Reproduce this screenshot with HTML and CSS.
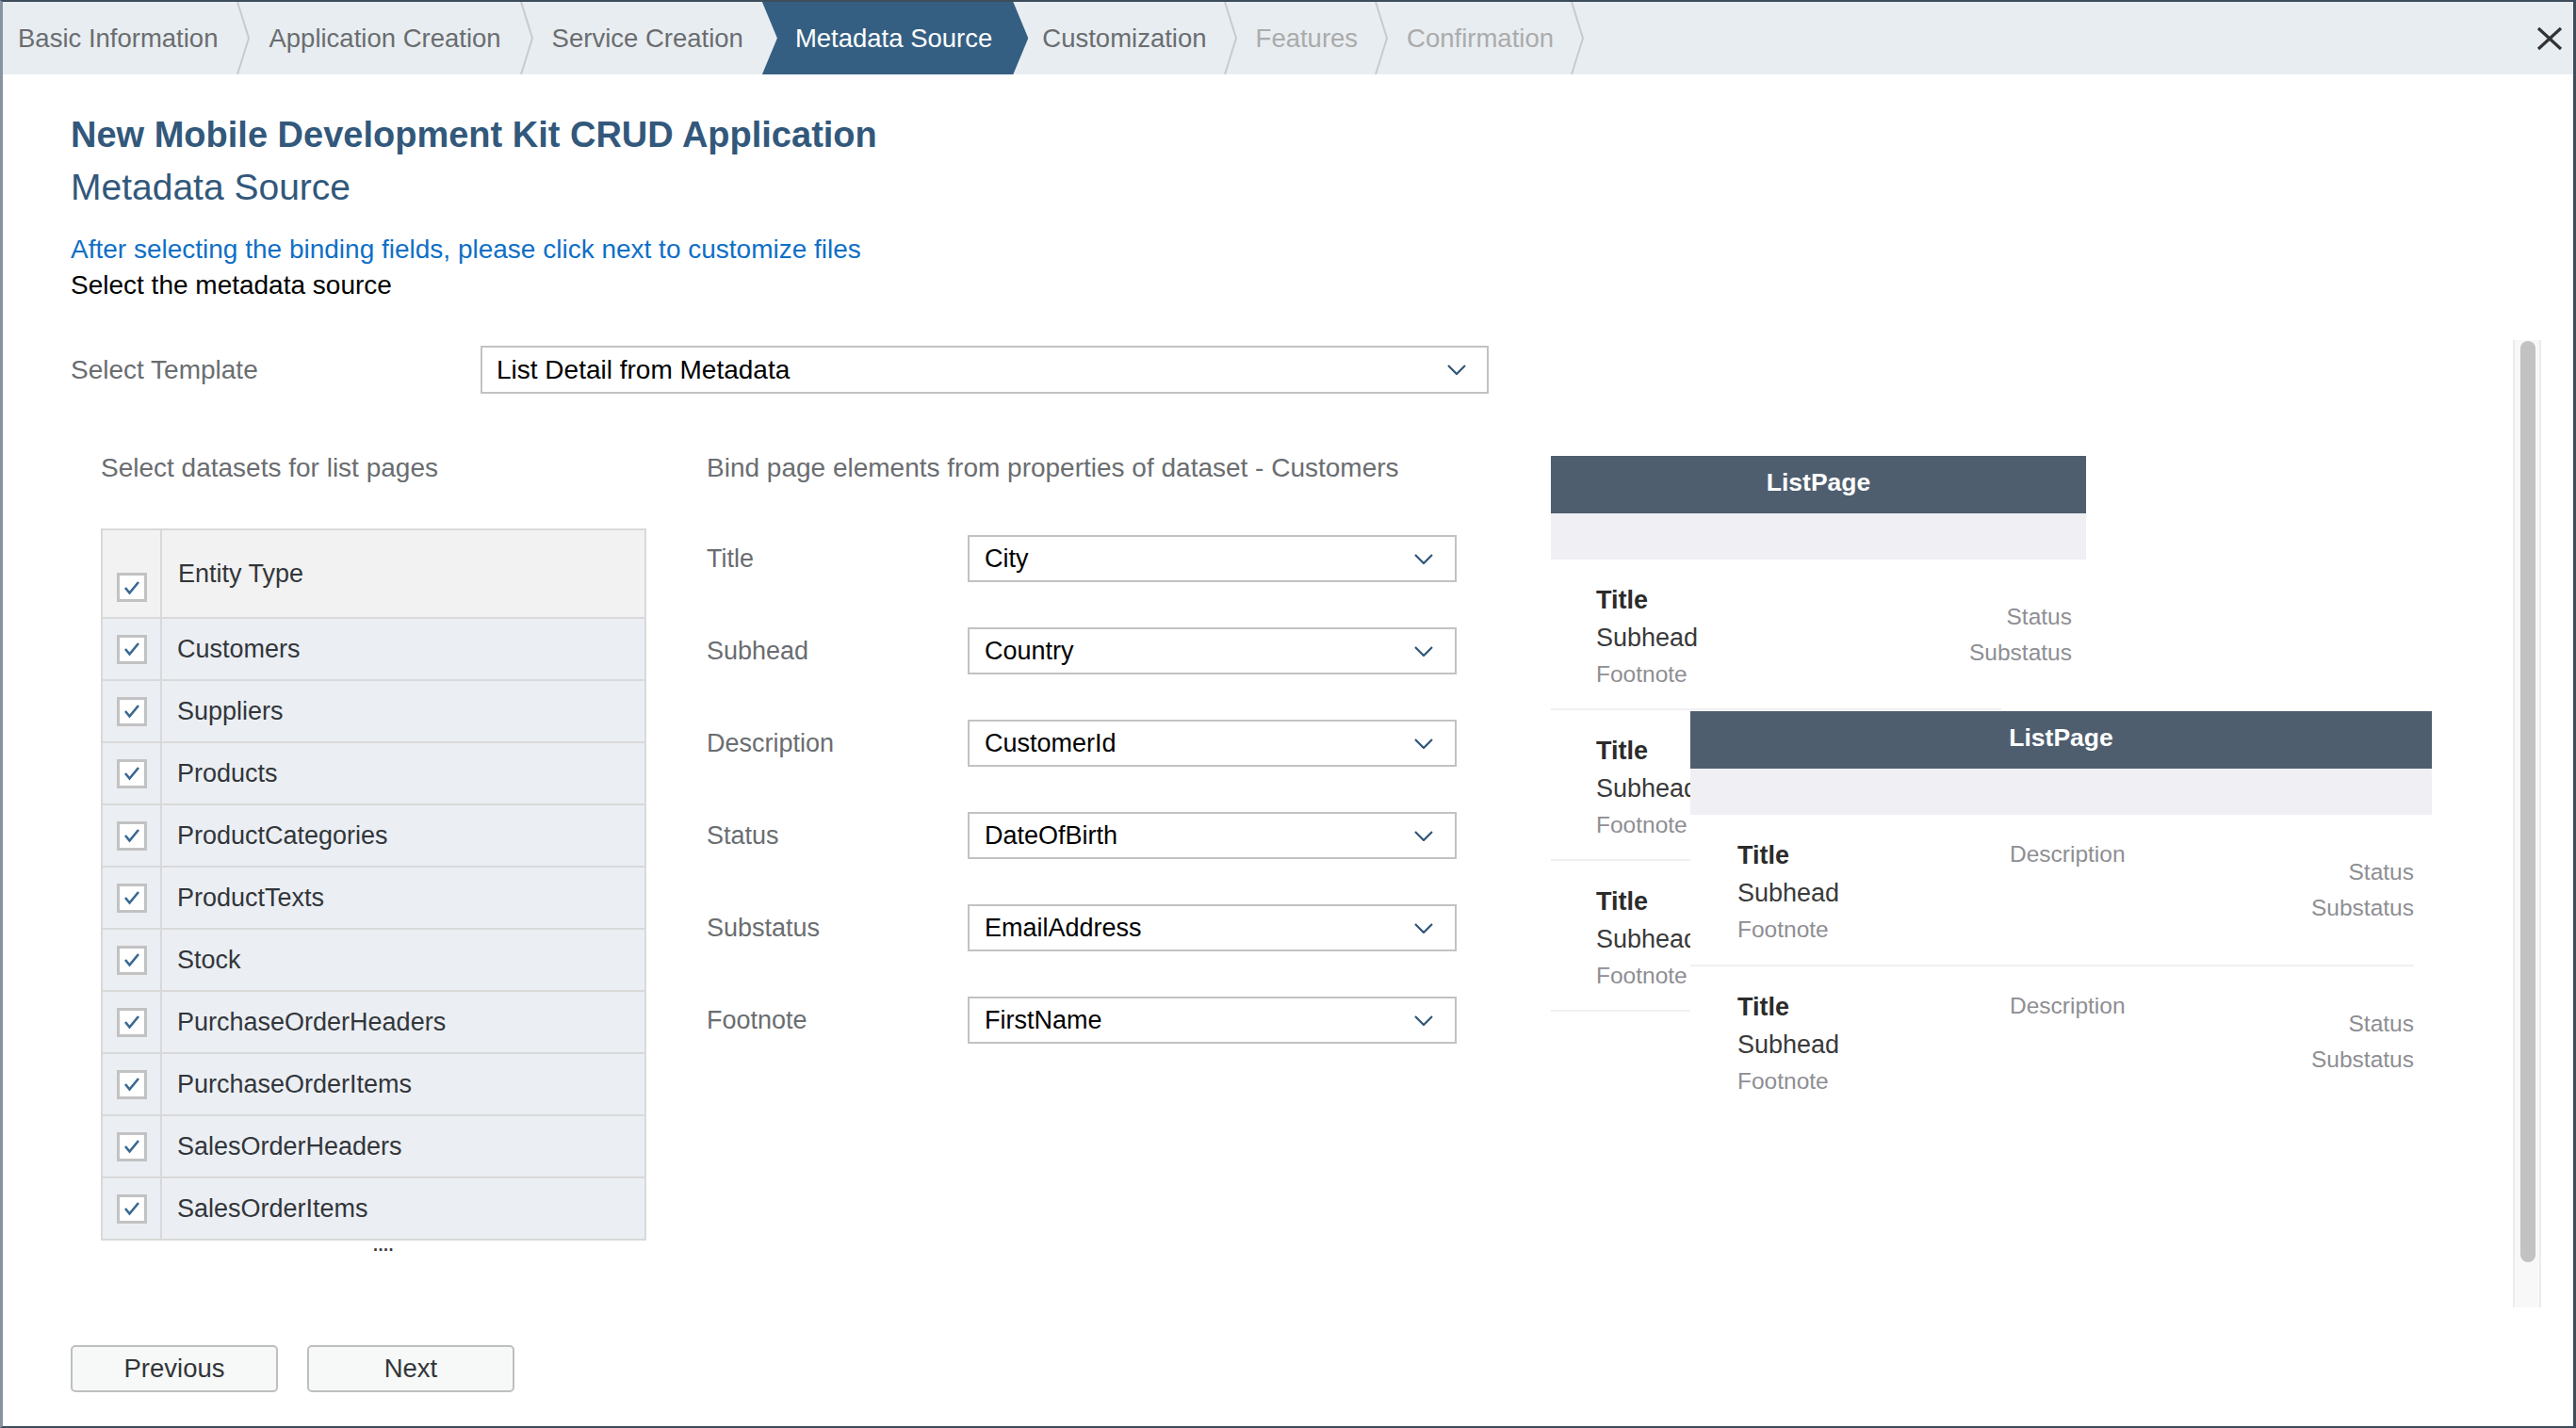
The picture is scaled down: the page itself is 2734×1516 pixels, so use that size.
FILE: index.html
```html
<!DOCTYPE html>
<html lang="en">
<head>
<meta charset="utf-8">
<title>New Mobile Development Kit CRUD Application</title>
<link rel="stylesheet" href="styles.css">
</head>
<body>
<div class="frame">
  <header class="wizard">
    <div class="step step-first">Basic Information</div>
    <svg class="sep" viewBox="0 0 14 77"><polyline points="1,0 13,38.5 1,77"/></svg>
    <div class="step step-wide">Application Creation</div>
    <svg class="sep" viewBox="0 0 14 77"><polyline points="1,0 13,38.5 1,77"/></svg>
    <div class="step step-wide">Service Creation</div>
    <div class="step step-active">Metadata Source</div>
    <div class="step step-next">Customization</div>
    <svg class="sep" viewBox="0 0 14 77"><polyline points="1,0 13,38.5 1,77"/></svg>
    <div class="step step-disabled">Features</div>
    <svg class="sep" viewBox="0 0 14 77"><polyline points="1,0 13,38.5 1,77"/></svg>
    <div class="step step-disabled">Confirmation</div>
    <svg class="sep" viewBox="0 0 14 77"><polyline points="1,0 13,38.5 1,77"/></svg>
    <button class="close" aria-label="Close">
      <svg viewBox="0 0 28 26" width="28" height="26"><line x1="2" y1="2" x2="26" y2="24"/><line x1="26" y1="2" x2="2" y2="24"/></svg>
    </button>
  </header>

  <main class="page">
    <h1 class="title">New Mobile Development Kit CRUD Application</h1>
    <h2 class="subtitle">Metadata Source</h2>
    <p class="hint">After selecting the binding fields, please click next to customize files</p>
    <p class="lead">Select the metadata source</p>

    <div class="scroll">
      <div class="scroll-content">
        <div class="template-row">
          <span class="field-label template-label">Select Template</span>
          <div class="select select-wide"><span>List Detail from Metadata</span><svg class="chev" viewBox="0 0 20 11"><polyline points="1,1 10,10 19,1"/></svg></div>
        </div>

        <div class="sections">
          <section class="col-datasets">
            <div class="section-title">Select datasets for list pages</div>
            <div class="table">
              <div class="trow thead"><div class="tcheck"><span class="cb"><svg viewBox="0 0 18 16"><polyline points="2,8 6.5,13.5 16,2"/></svg></span></div><div class="tcell">Entity Type</div></div>
              <div class="trow"><div class="tcheck"><span class="cb"><svg viewBox="0 0 18 16"><polyline points="2,8 6.5,13.5 16,2"/></svg></span></div><div class="tcell">Customers</div></div>
              <div class="trow"><div class="tcheck"><span class="cb"><svg viewBox="0 0 18 16"><polyline points="2,8 6.5,13.5 16,2"/></svg></span></div><div class="tcell">Suppliers</div></div>
              <div class="trow"><div class="tcheck"><span class="cb"><svg viewBox="0 0 18 16"><polyline points="2,8 6.5,13.5 16,2"/></svg></span></div><div class="tcell">Products</div></div>
              <div class="trow"><div class="tcheck"><span class="cb"><svg viewBox="0 0 18 16"><polyline points="2,8 6.5,13.5 16,2"/></svg></span></div><div class="tcell">ProductCategories</div></div>
              <div class="trow"><div class="tcheck"><span class="cb"><svg viewBox="0 0 18 16"><polyline points="2,8 6.5,13.5 16,2"/></svg></span></div><div class="tcell">ProductTexts</div></div>
              <div class="trow"><div class="tcheck"><span class="cb"><svg viewBox="0 0 18 16"><polyline points="2,8 6.5,13.5 16,2"/></svg></span></div><div class="tcell">Stock</div></div>
              <div class="trow"><div class="tcheck"><span class="cb"><svg viewBox="0 0 18 16"><polyline points="2,8 6.5,13.5 16,2"/></svg></span></div><div class="tcell">PurchaseOrderHeaders</div></div>
              <div class="trow"><div class="tcheck"><span class="cb"><svg viewBox="0 0 18 16"><polyline points="2,8 6.5,13.5 16,2"/></svg></span></div><div class="tcell">PurchaseOrderItems</div></div>
              <div class="trow"><div class="tcheck"><span class="cb"><svg viewBox="0 0 18 16"><polyline points="2,8 6.5,13.5 16,2"/></svg></span></div><div class="tcell">SalesOrderHeaders</div></div>
              <div class="trow"><div class="tcheck"><span class="cb"><svg viewBox="0 0 18 16"><polyline points="2,8 6.5,13.5 16,2"/></svg></span></div><div class="tcell">SalesOrderItems</div></div>
            </div>
            <div class="more">....</div>
          </section>

          <section class="col-bind">
            <div class="section-title">Bind page elements from properties of dataset - Customers</div>
            <div class="bind-rows">
              <div class="bind-row"><span class="field-label">Title</span><div class="select"><span>City</span><svg class="chev" viewBox="0 0 20 11"><polyline points="1,1 10,10 19,1"/></svg></div></div>
              <div class="bind-row"><span class="field-label">Subhead</span><div class="select"><span>Country</span><svg class="chev" viewBox="0 0 20 11"><polyline points="1,1 10,10 19,1"/></svg></div></div>
              <div class="bind-row"><span class="field-label">Description</span><div class="select"><span>CustomerId</span><svg class="chev" viewBox="0 0 20 11"><polyline points="1,1 10,10 19,1"/></svg></div></div>
              <div class="bind-row"><span class="field-label">Status</span><div class="select"><span>DateOfBirth</span><svg class="chev" viewBox="0 0 20 11"><polyline points="1,1 10,10 19,1"/></svg></div></div>
              <div class="bind-row"><span class="field-label">Substatus</span><div class="select"><span>EmailAddress</span><svg class="chev" viewBox="0 0 20 11"><polyline points="1,1 10,10 19,1"/></svg></div></div>
              <div class="bind-row"><span class="field-label">Footnote</span><div class="select"><span>FirstName</span><svg class="chev" viewBox="0 0 20 11"><polyline points="1,1 10,10 19,1"/></svg></div></div>
            </div>
          </section>

          <section class="col-preview">
            <div class="pv pv-a">
              <div class="pv-head">ListPage</div>
              <div class="pv-band"></div>
              <div class="pv-item">
                <div class="pv-main"><div class="pv-t">Title</div><div class="pv-s">Subhead</div><div class="pv-f">Footnote</div></div>
                <div class="pv-side"><div>Status</div><div>Substatus</div></div>
              </div>
              <div class="pv-item">
                <div class="pv-main"><div class="pv-t">Title</div><div class="pv-s">Subhead</div><div class="pv-f">Footnote</div></div>
                <div class="pv-side"><div>Status</div><div>Substatus</div></div>
              </div>
              <div class="pv-item">
                <div class="pv-main"><div class="pv-t">Title</div><div class="pv-s">Subhead</div><div class="pv-f">Footnote</div></div>
                <div class="pv-side"><div>Status</div><div>Substatus</div></div>
              </div>
            </div>
            <div class="pv pv-b">
              <div class="pv-head">ListPage</div>
              <div class="pv-band"></div>
              <div class="pv-item">
                <div class="pv-main"><div class="pv-t">Title</div><div class="pv-s">Subhead</div><div class="pv-f">Footnote</div></div>
                <div class="pv-desc">Description</div>
                <div class="pv-side"><div>Status</div><div>Substatus</div></div>
              </div>
              <div class="pv-item">
                <div class="pv-main"><div class="pv-t">Title</div><div class="pv-s">Subhead</div><div class="pv-f">Footnote</div></div>
                <div class="pv-desc">Description</div>
                <div class="pv-side"><div>Status</div><div>Substatus</div></div>
              </div>
            </div>
          </section>
        </div>
      </div>
      <div class="scrollbar"><div class="thumb"></div></div>
    </div>

    <footer class="actions">
      <button class="btn">Previous</button>
      <button class="btn">Next</button>
    </footer>
  </main>
</div>
</body>
</html>
```

FILE: styles.css
```css
* { box-sizing: border-box; }

html, body {
  margin: 0;
  padding: 0;
}

body {
  width: 2734px;
  height: 1516px;
  overflow: hidden;
  background: #ffffff;
  color: #32363a;
  font-family: "Liberation Sans", Arial, sans-serif;
}

.frame {
  width: 2734px;
  height: 1516px;
  display: flex;
  flex-direction: column;
  overflow: hidden;
  background: #ffffff;
  border-top: 2px solid #3d4d5c;
  border-right: 3px solid #3d4d5c;
  border-bottom: 2px solid #3d4d5c;
  border-left: 3px solid #8693a0;
}

/* ---------- wizard navigation ---------- */
.wizard {
  flex: none;
  height: 77px;
  display: flex;
  align-items: stretch;
  background: #e8edf1;
}

.step {
  display: flex;
  align-items: center;
  padding: 0 18px 0 20px;
  font-size: 27.5px;
  color: #6a6d70;
  white-space: nowrap;
}

.step-first { padding: 0 20px 0 16px; }
.step-wide { padding-right: 20px; }

.step-active {
  background: #355f82;
  color: #ffffff;
  padding: 0 38px 0 35px;
  clip-path: polygon(0 0, calc(100% - 16px) 0, 100% 50%, calc(100% - 16px) 100%, 0 100%, 16px 50%);
}

.step-next { padding-left: 15px; }
.step-disabled { color: #ababab; }

.sep {
  flex: none;
  width: 14px;
  height: 77px;
}

.sep polyline {
  fill: none;
  stroke: #c6cbd0;
  stroke-width: 2;
}

.close {
  margin-left: auto;
  margin-right: 11px;
  align-self: center;
  width: 28px;
  height: 26px;
  padding: 0;
  border: 0;
  background: none;
  display: flex;
}

.close line {
  stroke: #333333;
  stroke-width: 3.2;
}

/* ---------- page ---------- */
.page {
  flex: 1;
  display: flex;
  flex-direction: column;
  padding-left: 72px;
}

.title {
  margin: 40px 0 0;
  font-size: 38px;
  line-height: 48px;
  font-weight: 700;
  color: #32587b;
}

.subtitle {
  margin: 8px 0 0;
  font-size: 39px;
  line-height: 48px;
  font-weight: 400;
  color: #32587b;
}

.hint {
  margin: 23px 0 0;
  font-size: 28px;
  line-height: 38px;
  color: #0f6fc6;
}

.lead {
  margin: 0;
  font-size: 28px;
  line-height: 38px;
  color: #000000;
}

/* ---------- scroll area ---------- */
.scroll {
  flex: none;
  margin-top: 39px;
  height: 1027px;
  display: flex;
}

.scroll-content {
  flex: 1;
  padding-top: 6px;
}

.scrollbar {
  flex: none;
  width: 30px;
  margin-right: 34px;
  background: #f8f8f8;
  border-left: 2px solid #ebebeb;
  border-right: 2px solid #ebebeb;
  padding: 1px 4px 0 6px;
}

.thumb {
  width: 16px;
  height: 978px;
  border-radius: 8px;
  background: #c2c2c2;
}

/* ---------- template row ---------- */
.template-row {
  display: flex;
  align-items: center;
  height: 51px;
}

.field-label {
  font-size: 28px;
  color: #6a6d70;
}

.template-label {
  flex: none;
  width: 435px;
}

.select {
  display: flex;
  align-items: center;
  justify-content: space-between;
  height: 51px;
  padding: 0 22px 0 15px;
  border: 2px solid #c2c2c2;
  background: #ffffff;
  font-size: 28px;
  color: #000000;
}

.select-wide { width: 1070px; }

.chev {
  flex: none;
  width: 20px;
  height: 11px;
}

.chev polyline {
  fill: none;
  stroke: #2f5679;
  stroke-width: 2.2;
}

/* ---------- sections ---------- */
.sections {
  display: flex;
  align-items: flex-start;
  margin-top: 59px;
  margin-left: 32px;
}

.section-title {
  font-size: 28px;
  line-height: 40px;
  color: #6a6d70;
  white-space: nowrap;
}

.col-datasets {
  flex: none;
  width: 579px;
}

.table {
  margin-top: 44px;
  border: 2px solid #d9d9d9;
}

.trow {
  display: grid;
  grid-template-columns: 63px 1fr;
  height: 66px;
  border-top: 2px solid #d9d9d9;
  background: #ebeef3;
}

.thead {
  height: 92px;
  border-top: 0;
  background: #f2f2f2;
}

.tcheck {
  display: flex;
  align-items: center;
  justify-content: center;
  border-right: 2px solid #d9d9d9;
}

.thead .tcheck {
  align-items: flex-end;
  padding-bottom: 16px;
}

.tcell {
  display: flex;
  align-items: center;
  padding-left: 16px;
  font-size: 27px;
  color: #32363a;
}

.thead .tcell { padding-left: 17px; }

.cb {
  width: 32px;
  height: 31px;
  border: 3px solid #c2c2c2;
  background: #ffffff;
  display: flex;
  align-items: center;
  justify-content: center;
}

.cb svg {
  width: 18px;
  height: 16px;
}

.cb polyline {
  fill: none;
  stroke: #3a6891;
  stroke-width: 2.6;
}

.more {
  margin-top: -2px;
  padding-left: 21px;
  height: 14px;
  text-align: center;
  font-size: 18px;
  font-weight: 700;
  line-height: 14px;
  letter-spacing: 0.5px;
  color: #32363a;
}

.col-bind {
  flex: none;
  width: 796px;
  margin-left: 64px;
}

.bind-rows {
  margin-top: 51px;
  display: flex;
  flex-direction: column;
  gap: 48px;
}

.bind-row {
  display: flex;
  align-items: center;
}

.bind-row .field-label {
  flex: none;
  width: 277px;
  font-size: 27px;
}

.bind-row .select {
  width: 519px;
  height: 50px;
  padding: 0 23px 0 16px;
  font-size: 27px;
}

/* ---------- preview ---------- */
.col-preview {
  flex: none;
  position: relative;
  width: 934px;
  margin-left: 100px;
  margin-top: 7px;
}

.pv {
  background: #ffffff;
  white-space: nowrap;
}

.pv-a {
  width: 568px;
  overflow: hidden;
}

.pv-b {
  position: absolute;
  left: 148px;
  top: 271px;
  width: 787px;
}

.pv-head {
  height: 61px;
  display: flex;
  align-items: center;
  justify-content: center;
  padding-bottom: 5px;
  background: #4e5e6f;
  color: #ffffff;
  font-size: 26.5px;
  font-weight: 700;
}

.pv-band {
  height: 49px;
  background: #efeff4;
}

.pv-item {
  height: 160px;
  display: flex;
  justify-content: space-between;
  padding: 0 15px 0 48px;
  background: linear-gradient(#f0f0f2, #f0f0f2) left bottom / calc(100% - 90px) 2px no-repeat;
}

.pv-b .pv-item {
  height: 161px;
  display: grid;
  grid-template-columns: 289px 1fr auto;
  padding: 0 19px 0 50px;
  background-size: calc(100% - 19px) 2px;
}

.pv-b .pv-item:last-child {
  background: none;
}

.pv-main { padding-top: 23px; }

.pv-t {
  font-size: 27px;
  line-height: 40px;
  font-weight: 700;
  color: #2b2b2b;
}

.pv-s {
  font-size: 27px;
  line-height: 40px;
  color: #3a3a3a;
}

.pv-f {
  font-size: 24.5px;
  line-height: 38px;
  color: #8e8e93;
}

.pv-desc {
  padding-top: 22px;
  font-size: 24.5px;
  line-height: 40px;
  color: #8e8e93;
}

.pv-side {
  padding-top: 42px;
  text-align: right;
}

.pv-side div {
  font-size: 24.5px;
  line-height: 38px;
  color: #8e8e93;
}

/* ---------- footer ---------- */
.actions {
  flex: none;
  margin-top: 40px;
  display: flex;
  gap: 31px;
}

.btn {
  width: 220px;
  height: 50px;
  border: 2px solid #bfbfbf;
  border-radius: 5px;
  background: #f7f8f8;
  font-family: "Liberation Sans", Arial, sans-serif;
  font-size: 27.5px;
  color: #32363a;
  padding: 0;
}
```
